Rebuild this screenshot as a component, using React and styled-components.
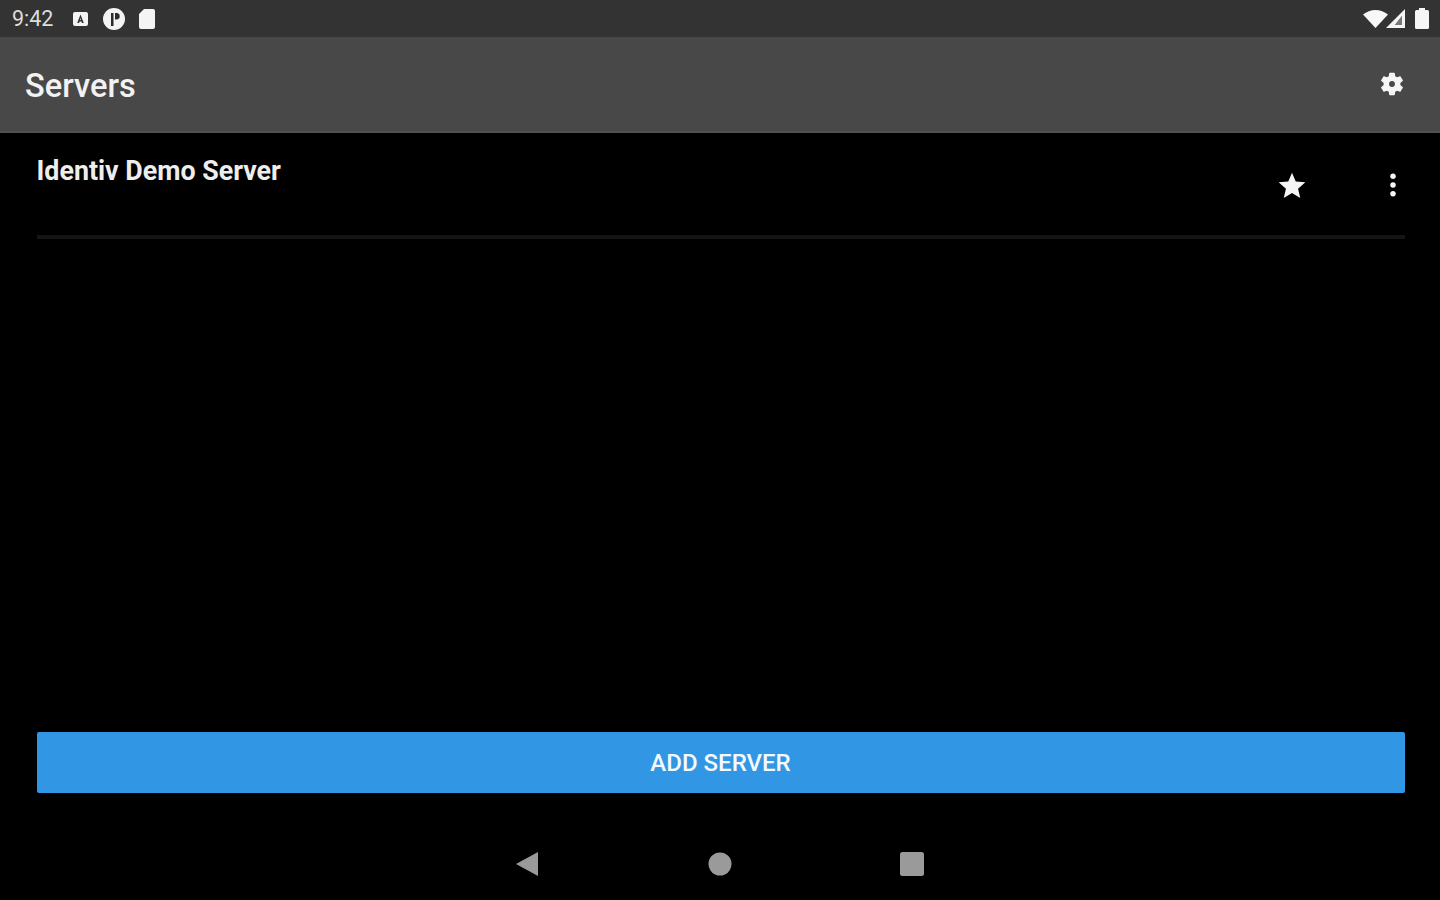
import React from 'react';
import styled, { createGlobalStyle } from 'styled-components';

const Global = createGlobalStyle`
    html, body {
        margin: 0;
        padding: 0;
        background: #000;
    }
    * {
        box-sizing: border-box;
    }
`

const Screen = styled.div`
    width: 1440px;
    height: 900px;
    display: flex;
    flex-direction: column;
    background: #000;
    overflow: hidden;
    font-family: Roboto, "Liberation Sans", sans-serif;
`

const StatusBar = styled.div`
    height: 37px;
    flex: none;
    display: flex;
    align-items: center;
    justify-content: space-between;
    padding: 0 11px 0 12px;
    background: #333333;
`

const StatusGroup = styled.div`
    display: flex;
    align-items: center;
`

const Clock = styled.span`
    width: 60px;
    font-size: 21.5px;
    color: #dcdcdc;
`

const StatusIcon = styled.svg`
    display: block;
    margin-left: ${(props)=>props.$gap || 0}px;
`

const AppBar = styled.div`
    height: 96px;
    flex: none;
    display: flex;
    align-items: center;
    justify-content: space-between;
    padding: 0 34px 0 25px;
    background: #484848;
    border-bottom: 2px solid #525252;
`

const AppTitle = styled.h1`
    margin: 4px 0 0;
    font-size: 32.6px;
    font-weight: 500;
    color: #f2f2f2;
`

const Content = styled.main`
    flex: 1;
    display: flex;
    flex-direction: column;
    padding: 0 35.5px 0 36.5px;
`

const ServerList = styled.div`
    flex: 1;
`

const ServerRow = styled.div`
    height: 106px;
    display: flex;
    justify-content: space-between;
    border-bottom: 4px solid #141414;
`

const ServerName = styled.h2`
    margin: 21px 0 0;
    font-size: 26.8px;
    line-height: 34px;
    font-weight: 700;
    color: #eeeeee;
`

const RowActions = styled.div`
    display: flex;
    align-items: flex-start;
    gap: 70px;
    padding: 37px 0 0;
    margin-right: -3px;
`

const AddButton = styled.button`
    height: 61px;
    flex: none;
    margin-bottom: 57px;
    border: 0;
    border-radius: 2px;
    background: #3197e4;
    color: #f4f9fd;
    font-family: inherit;
    font-size: 24px;
    font-weight: 500;
`

const NavBar = styled.nav`
    height: 28px;
    flex: none;
    margin-bottom: 22px;
    display: flex;
    justify-content: center;
    align-items: center;
    gap: 168px;
`

const NavIcon = styled.svg`
    display: block;
    fill: #9a9a9a;
    transform: translateX(${(props)=>props.$shift || 0}px);
`

export default function App(){

    return(
        <Screen>
            <Global />
            <StatusBar>
                <StatusGroup>
                    <Clock>9:42</Clock>
                    <StatusIcon width="17" height="16" viewBox="0 0 17 16">
                        <rect x="1" y="1" width="15" height="14" rx="2" fill="#f4f4f4" />
                        <path d="M8.5 3.5 5.2 12h1.9l.5-1.5h1.8l.5 1.5h1.9zM8 9l.5-2 .5 2z" fill="#333" />
                    </StatusIcon>
                    <StatusIcon $gap={13} width="24" height="24" viewBox="0 0 24 24">
                        <circle cx="12" cy="12" r="11" fill="#f4f4f4" />
                        <path d="M9 6h2.500v13H9zM13 6h2a3.300 3.300 0 0 1 0 6.500h-2z" fill="#2b2b2b" />
                    </StatusIcon>
                    <StatusIcon $gap={13} width="16" height="20" viewBox="0 0 16 20">
                        <path d="M5 0h9a2 2 0 0 1 2 2v16a2 2 0 0 1-2 2H2a2 2 0 0 1-2-2V5z" fill="#f4f4f4" />
                    </StatusIcon>
                </StatusGroup>
                <StatusGroup>
                    <StatusIcon width="25" height="18" viewBox="0 0 25 18">
                        <path d="M0 4.500C3.500 1.800 7.800 0 12.500 0S21.500 1.800 25 4.500L12.500 18z" fill="#f8f8f8" />
                    </StatusIcon>
                    <StatusIcon $gap={-2} width="20" height="19" viewBox="0 0 20 19">
                        <path d="M19 0v19H0zM16 7l-7 9h7z" fill="#f4f4f4" fillRule="evenodd" />
                        <path d="M16 7l-7 9h7z" fill="#777" />
                    </StatusIcon>
                    <StatusIcon $gap={9} width="14" height="21" viewBox="0 0 14 21">
                        <path d="M4 0h6v2h2.500A1.500 1.500 0 0 1 14 3.500V19.500A1.500 1.500 0 0 1 12.500 21h-11A1.500 1.500 0 0 1 0 19.500V3.500A1.500 1.500 0 0 1 1.500 2H4z" fill="#f6f6f6" />
                    </StatusIcon>
                </StatusGroup>
            </StatusBar>
            <AppBar>
                <AppTitle>Servers</AppTitle>
                <svg width="28" height="28" viewBox="0 0 24 24" fill="#f6f6f6">
                    <path fillRule="evenodd" d="M19.140 12.940c.04-.3.060-.61.060-.94 0-.32-.020-.64-.070-.94l2.030-1.580a.49.49 0 0 0 .12-.61l-1.920-3.320a.488.488 0 0 0-.59-.22l-2.390.96c-.5-.38-1.030-.7-1.620-.94l-.36-2.540a.484.484 0 0 0-.48-.41h-3.840c-.24 0-.43.170-.47.410l-.36 2.540c-.59.240-1.130.570-1.620.94l-2.390-.96c-.220-.080-.470 0-.59.220L2.740 8.870c-.120.210-.080.470.120.610l2.030 1.580c-.050.3-.090.630-.090.940s.020.640.070.940l-2.030 1.580a.49.49 0 0 0-.12.610l1.920 3.320c.120.220.370.290.59.220l2.390-.96c.5.380 1.030.7 1.620.94l.36 2.540c.050.240.240.410.480.410h3.840c.24 0 .44-.170.470-.410l.36-2.540c.59-.240 1.130-.560 1.620-.94l2.390.96c.220.080.470 0 .59-.220l1.920-3.320c.120-.220.070-.470-.120-.61zM12 14.500a2.500 2.500 0 1 1 0-5 2.500 2.500 0 0 1 0 5z" />
                </svg>
            </AppBar>
            <Content>
                <ServerList>
                    <ServerRow>
                        <ServerName>Identiv Demo Server</ServerName>
                        <RowActions>
                            <svg width="32" height="32" viewBox="0 0 24 24" fill="#f6f6f6">
                                <path d="M12 17.270 18.180 21l-1.640-7.030L22 9.240l-7.190-.61L12 2 9.190 8.630 2 9.240l5.460 4.730L5.820 21z" />
                            </svg>
                            <svg width="30" height="30" viewBox="0 0 24 24" fill="#f6f6f6">
                                <circle cx="12" cy="5" r="2.200" />
                                <circle cx="12" cy="12" r="2.200" />
                                <circle cx="12" cy="19" r="2.200" />
                            </svg>
                        </RowActions>
                    </ServerRow>
                </ServerList>
                <AddButton>ADD SERVER</AddButton>
            </Content>
            <NavBar>
                <NavIcon $shift={-1} width="24" height="26" viewBox="0 0 24 26">
                    <path d="M23 1v24L1 13z" />
                </NavIcon>
                <NavIcon width="24" height="24" viewBox="0 0 24 24">
                    <circle cx="12" cy="12" r="11.500" />
                </NavIcon>
                <NavIcon width="24" height="24" viewBox="0 0 24 24">
                    <rect width="24" height="24" rx="2.500" />
                </NavIcon>
            </NavBar>
        </Screen>
    )

}
